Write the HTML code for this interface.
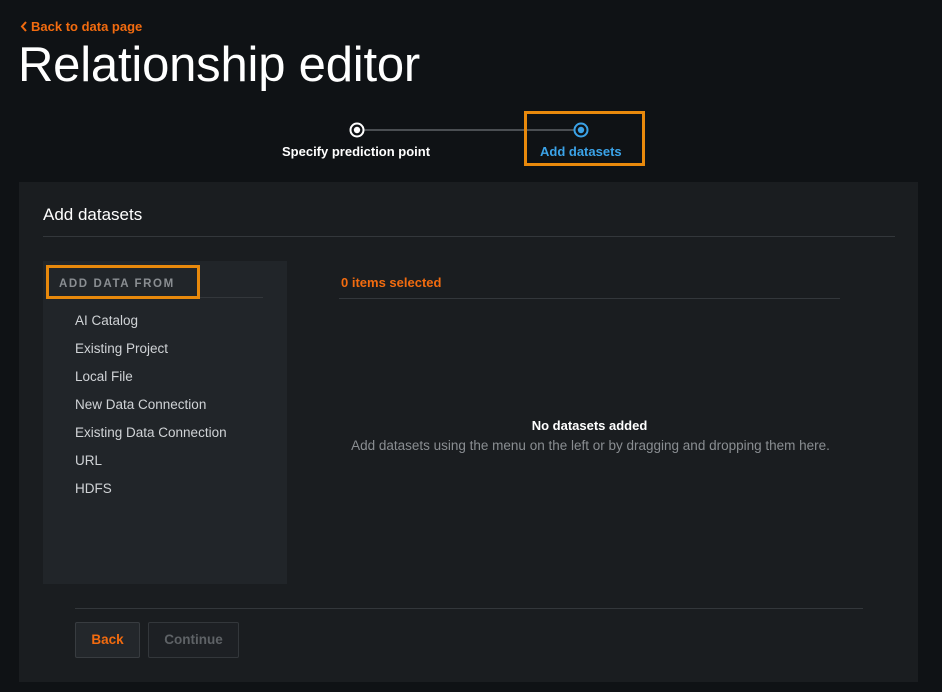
<!DOCTYPE html>
<html><head><meta charset="utf-8"><style>
*{margin:0;padding:0;box-sizing:border-box}
body{width:942px;height:692px;background:#0f1215;font-family:"Liberation Sans",sans-serif;position:relative;overflow:hidden;color:#fff}
.a{position:absolute;white-space:nowrap}
</style></head><body>
<div class="a" style="left:20px;top:19px;color:#f26b0f;font-size:13px;font-weight:bold">
<svg width="8" height="11" viewBox="0 0 8 11" style="vertical-align:-1px;margin-right:3px"><path d="M6 1L2 5.5L6 10" stroke="#f26b0f" stroke-width="2" fill="none"/></svg>Back to data page</div>
<div class="a" style="left:18px;top:37px;font-size:49px;color:#fff;letter-spacing:-0.2px">Relationship editor</div>
<div class="a" style="left:363px;top:129px;width:212px;height:2px;background:#4a4e52"></div>
<svg class="a" style="left:348px;top:121px" width="18" height="18"><circle cx="9" cy="9" r="6.5" stroke="#fff" stroke-width="2" fill="#0f1215"/><circle cx="9" cy="9" r="3.2" fill="#fff"/></svg>
<svg class="a" style="left:572px;top:121px" width="18" height="18"><circle cx="9" cy="9" r="6.5" stroke="#3ba3e8" stroke-width="2" fill="#0f1215"/><circle cx="9" cy="9" r="3.2" fill="#3ba3e8"/></svg>
<div class="a" style="left:282px;top:144px;font-size:13px;font-weight:bold">Specify prediction point</div>
<div class="a" style="left:540px;top:144px;font-size:13px;font-weight:bold;color:#3ba3e8">Add datasets</div>
<div class="a" style="left:524px;top:111px;width:121px;height:55px;border:3px solid #e8890c"></div>
<div class="a" style="left:19px;top:182px;width:899px;height:500px;background:#1a1d20"></div>
<div class="a" style="left:43px;top:205px;font-size:17px">Add datasets</div>
<div class="a" style="left:43px;top:236px;width:852px;height:1px;background:#33373b"></div>
<div class="a" style="left:43px;top:261px;width:244px;height:323px;background:#212529"></div>
<div class="a" style="left:59px;top:297px;width:204px;height:1px;background:#33373b"></div>
<div class="a" style="left:59px;top:278px;font-size:11.5px;font-weight:bold;letter-spacing:1.6px;color:#8a8e92">ADD DATA FROM</div>
<div class="a" style="left:46px;top:265px;width:154px;height:34px;border:3px solid #e8890c"></div>
<div class="a" style="left:75px;top:307px;font-size:13.5px;color:#d0d3d6;line-height:28px">AI Catalog<br>Existing Project<br>Local File<br>New Data Connection<br>Existing Data Connection<br>URL<br>HDFS</div>
<div class="a" style="left:341px;top:275px;font-size:13px;font-weight:bold;color:#f26b0f">0 items selected</div>
<div class="a" style="left:339px;top:298px;width:501px;height:1px;background:#33373b"></div>
<div class="a" style="left:339px;top:418px;width:501px;text-align:center;font-size:13px;font-weight:bold">No datasets added</div>
<div class="a" style="left:339px;top:438px;width:503px;text-align:center;font-size:13.5px;color:#8a8e92">Add datasets using the menu on the left or by dragging and dropping them here.</div>
<div class="a" style="left:75px;top:608px;width:788px;height:1px;background:#33373b"></div>
<div class="a" style="left:75px;top:622px;width:65px;height:36px;background:#23272b;border:1px solid #383c40;border-radius:2px;color:#f26b0f;font-size:13.5px;font-weight:bold;text-align:center;line-height:34px">Back</div>
<div class="a" style="left:148px;top:622px;width:91px;height:36px;background:#1d2024;border:1px solid #33373b;border-radius:2px;color:#5e6266;font-size:13.5px;font-weight:bold;text-align:center;line-height:34px">Continue</div>
</body></html>
